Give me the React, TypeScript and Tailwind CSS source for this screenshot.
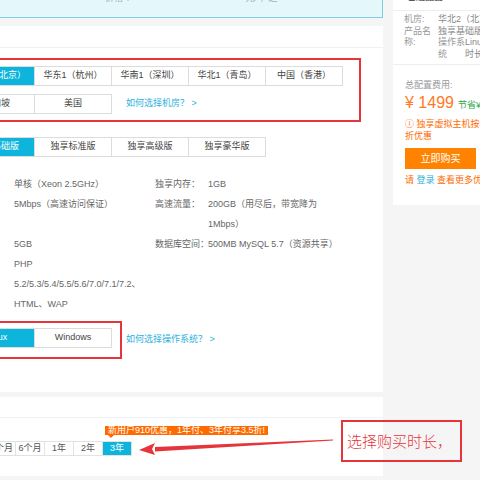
import React from 'react';

const REGIONS_ROW1 = ['华北2（北京）', '华东1（杭州）', '华南1（深圳）', '华北1（青岛）', '中国（香港）'];
const REGIONS_ROW2 = ['新加坡', '美国'];
const EDITIONS = ['独享基础版', '独享标准版', '独享高级版', '独享豪华版'];
const DURATIONS = ['3个月', '6个月', '1年', '2年', '3年'];

const Opt: React.FC<{ label: string; active?: boolean; first?: boolean }> = ({ label, active, first }) => (
  <div
    className={`h-[20px] w-[77px] shrink-0 flex items-center justify-center text-[9px] border border-[#dcdcdc] ${
      first ? '' : 'border-l-0'
    } ${active ? 'bg-[#0db4dc] border-[#0db4dc] text-white' : 'bg-white text-[#444]'}`}
  >
    {label}
  </div>
);

const DurOpt: React.FC<{ label: string; active?: boolean; first?: boolean }> = ({ label, active, first }) => (
  <div
    className={`h-[15px] w-[29px] shrink-0 flex items-center justify-center text-[9px] border border-[#e2e2e2] ${
      first ? '' : 'border-l-0'
    } ${active ? 'bg-[#0db4dc] border-[#0db4dc] text-white' : 'bg-white text-[#555]'}`}
  >
    {label}
  </div>
);

const SpecRow: React.FC<{ left?: string; label?: string; children?: React.ReactNode }> = ({ left, label, children }) => (
  <div className="flex leading-[20px] text-[9px] text-[#666]">
    <div className="w-[155px] shrink-0 pl-[14px] whitespace-nowrap">{left}</div>
    <div className="w-[53px] shrink-0 whitespace-nowrap">{label}</div>
    <div className="whitespace-nowrap">{children}</div>
  </div>
);

export default function App() {
  return (
    <div className="relative w-[480px] h-[480px] overflow-hidden bg-[#f5f5f5] flex font-['Liberation_Sans','Noto_Sans_CJK_SC',sans-serif]">
      {/* main column */}
      <div className="w-[383px] shrink-0 flex flex-col">
        <div className="h-[18px] shrink-0 bg-[#e4f8fc] border-b border-r border-[#80d0dc] overflow-hidden">
          <div className="-mt-[6px] flex text-[9px] leading-[9px] text-[#aaa]">
            <span className="ml-[105px]">价格 ¥</span>
            <span className="ml-[115px]">元/年 起</span>
          </div>
        </div>

        <div className="mt-[8px] h-[366px] shrink-0 bg-white overflow-hidden">
          <div className="h-[22px] border-b border-[#edf2f6]" />

          {/* regions */}
          <div className="mt-[10px] -ml-[50px] w-[411px] border-2 border-[#e5353b] pt-[6px] pb-[6px] pl-[6px]">
            <div className="flex">
              {REGIONS_ROW1.map((r, i) => (
                <Opt key={r} label={r} active={i === 0} first={i === 0} />
              ))}
            </div>
            <div className="flex items-center mt-[8px]">
              {REGIONS_ROW2.map((r, i) => (
                <Opt key={r} label={r} first={i === 0} />
              ))}
              <span className="ml-[14px] text-[9px] text-[#2bb2dc] whitespace-nowrap">如何选择机房？ &gt;</span>
            </div>
          </div>

          {/* editions */}
          <div className="mt-[15px] -ml-[42px] flex">
            {EDITIONS.map((e, i) => (
              <Opt key={e} label={e} active={i === 0} first={i === 0} />
            ))}
          </div>

          {/* specs */}
          <div className="mt-[17px]">
            <SpecRow left="单核（Xeon 2.5GHz）" label="独享内存：">1GB</SpecRow>
            <SpecRow left="5Mbps（高速访问保证）" label="高速流量：">
              200GB（用尽后，带宽降为
              <br />
              1Mbps）
            </SpecRow>
            <SpecRow left="5GB" label="数据库空间：">500MB MySQL 5.7（资源共享）</SpecRow>
            <SpecRow left="PHP" />
            <SpecRow left="5.2/5.3/5.4/5.5/5.6/7.0/7.1/7.2、" />
            <SpecRow left="HTML、WAP" />
          </div>

          {/* os */}
          <div className="mt-[7px] flex items-center">
            <div className="-ml-[50px] w-[172px] border-2 border-[#e5353b] pt-[5px] pb-[9px] pl-[6px] flex">
              <Opt label="Linux" active first />
              <Opt label="Windows" />
            </div>
            <span className="ml-[4px] text-[9px] text-[#2bb2dc] whitespace-nowrap">如何选择操作系统？ &gt;</span>
          </div>
        </div>

        <div className="mt-[5px] h-[79px] shrink-0 bg-white overflow-hidden">
          <div className="h-[21px] border-b border-[#edf2f6]" />
          <div className="mt-[8px] pl-[105px] flex">
            <div className="relative bg-[#ff6a00] text-white text-[9px] leading-[9px] px-[3px] whitespace-nowrap">
              新用户910优惠，1年付、3年付享3.5折!
              <span className="absolute left-[3px] top-[9px] w-0 h-0 border-l-[3px] border-r-[3px] border-t-[3px] border-l-transparent border-r-transparent border-t-[#ff6a00]" />
            </div>
          </div>
          <div className="mt-[6px] -ml-[13px] flex">
            {DURATIONS.map((d, i) => (
              <DurOpt key={d} label={d} active={i === DURATIONS.length - 1} first={i === 0} />
            ))}
          </div>
        </div>
      </div>

      {/* side summary */}
      <div className="ml-[10px] w-[87px] h-[205px] shrink-0 bg-white overflow-hidden text-[9px] whitespace-nowrap">
        <div className="h-[11px] border-b border-[#eeeeee] overflow-hidden">
          <div className="-mt-[7px] pl-[14px] leading-[9px] text-[#333]">已选配置</div>
        </div>
        <div className="h-[54px] border-b border-[#eeeeee] pt-[3px] pl-[11px] leading-[11.7px] overflow-hidden">
          <div className="flex">
            <span className="w-[34px] shrink-0 text-[#999]">机房:</span>
            <span className="shrink-0 text-[#888]">华北2（北京）</span>
          </div>
          <div className="flex">
            <span className="w-[34px] shrink-0 text-[#999]">产品名</span>
            <span className="shrink-0 text-[#888]">独享基础版</span>
          </div>
          <div className="flex">
            <span className="w-[34px] shrink-0 text-[#999]">称:</span>
            <span className="w-[27px] shrink-0 text-[#999]">操作系</span>
            <span className="shrink-0 text-[#888]">Linux</span>
          </div>
          <div className="flex">
            <span className="w-[34px] shrink-0" />
            <span className="w-[27px] shrink-0 text-[#999]">统</span>
            <span className="shrink-0 text-[#888]">时长</span>
          </div>
        </div>
        <div className="pl-[12px]">
          <div className="mt-[14px] leading-[12px] text-[#999]">总配置费用:</div>
          <div className="mt-[2px] flex items-baseline leading-[20px]">
            <span className="text-[16px] text-[#ff7a22]">¥ 1499</span>
            <span className="ml-[4px] text-[9px] text-[#2aa84a]">节省¥1000</span>
          </div>
          <div className="mt-[3px] leading-[12px] text-[#ff6a00]">
            <div>ⓘ 独享虚拟主机按年</div>
            <div>折优惠</div>
          </div>
          <div className="mt-[6px] h-[21px] w-[71px] bg-[#ff8200] text-white text-[10px] flex items-center justify-center">
            立即购买
          </div>
          <div className="mt-[5px] leading-[12px] text-[#ff6a00]">
            请 <span className="text-[#2bb2dc]">登录</span> 查看更多优惠
          </div>
        </div>
      </div>

      {/* annotation overlay */}
      <svg className="absolute left-0 top-0 pointer-events-none" width="480" height="480" viewBox="0 0 480 480">
        <polygon points="333,439.5 333,440.5 155,451.5 155,447" fill="#e5353b" />
        <polygon points="139,450 155,443 152,449 155,455" fill="#e5353b" />
      </svg>
      <div className="absolute left-[341px] top-[420px] w-[121px] h-[42px] border-2 border-[#e5353b] flex items-center pl-[4px]">
        <span className="text-[15px] text-[#e5353b] whitespace-nowrap font-['Noto_Sans_CJK_SC',serif] font-light">选择购买时长，</span>
      </div>
    </div>
  );
}
